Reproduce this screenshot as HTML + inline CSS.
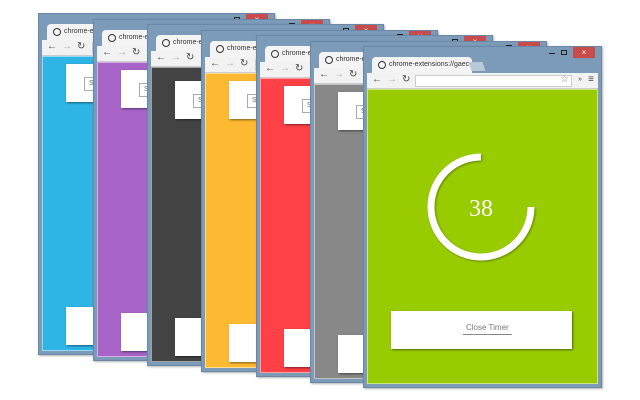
<!DOCTYPE html>
<html><head><meta charset="utf-8"><style>
*{margin:0;padding:0;box-sizing:border-box}
body{width:640px;height:400px;background:#fff;position:relative;overflow:hidden;font-family:"Liberation Sans",sans-serif}
.w{position:absolute;width:237px;height:342px;background:#7b9bb9;border:1px solid #6a88a6;box-shadow:1px 1px 2px rgba(0,0,0,.3);overflow:hidden}
.cl{position:absolute;right:6px;top:0;width:22px;height:11px;background:#c94b4b;color:#fff;font-size:8px;text-align:center;line-height:11px}
.mx{position:absolute;right:34px;top:3px;width:6px;height:5px;border:1px solid #222}
.mn{position:absolute;right:46px;top:6px;width:6px;height:1px;background:#222}
.tab{position:absolute;left:8px;top:10px;width:100px;height:17px;background:#f4f4f4;border-radius:4px 4px 0 0;font-size:7px;color:#333;padding:4px 0 0 17px;white-space:nowrap;overflow:hidden}
.tab:before{content:"";position:absolute;left:6px;top:4px;width:6px;height:6px;border:1.3px solid #333;border-radius:50%}
.tb{position:absolute;left:3px;right:3px;top:26px;height:16px;background:#f2f2f2;border-bottom:1px solid #ccc;font-size:10px;color:#444}
.tb span{position:absolute;top:1px}
.url{position:absolute;left:50px;right:30px;top:2px;height:12px;background:#fff;border:1px solid #ccc}
.c{position:absolute;left:3px;right:3px;top:42px;bottom:3px;border:1px solid rgba(255,255,255,.5)}
.box{position:absolute;background:#fff;box-shadow:1px 1px 2px rgba(0,0,0,.5)}
.sb{position:absolute;left:18px;top:13px;width:40px;height:14px;border:1px solid #aaa;font-size:7px;color:#666;padding:2px 0 0 4px}
</style></head><body>

<div class="w" style="left:38px;top:13px"><div class="mn"></div><div class="mx"></div><div class="cl">×</div><div class="tab">chrome-extensions://</div><div class="tb"><span style="left:5px">←</span><span style="left:20px;color:#aaa">→</span><span style="left:35px">↻</span><div class="url"></div></div><div class="c" style="background:#2eb5e5"><div class="box" style="left:23px;top:7px;width:100px;height:38px"><div class="sb">S</div></div><div class="box" style="left:23px;top:250px;width:100px;height:38px"></div></div></div>

<div class="w" style="left:93px;top:19px"><div class="mn"></div><div class="mx"></div><div class="cl">×</div><div class="tab">chrome-extensions://</div><div class="tb"><span style="left:5px">←</span><span style="left:20px;color:#aaa">→</span><span style="left:35px">↻</span><div class="url"></div></div><div class="c" style="background:#a864c9"><div class="box" style="left:23px;top:7px;width:100px;height:38px"><div class="sb">S</div></div><div class="box" style="left:23px;top:250px;width:100px;height:38px"></div></div></div>

<div class="w" style="left:147px;top:24px"><div class="mn"></div><div class="mx"></div><div class="cl">×</div><div class="tab">chrome-extensions://</div><div class="tb"><span style="left:5px">←</span><span style="left:20px;color:#aaa">→</span><span style="left:35px">↻</span><div class="url"></div></div><div class="c" style="background:#434343"><div class="box" style="left:23px;top:13px;width:100px;height:38px"><div class="sb">S</div></div><div class="box" style="left:23px;top:250px;width:100px;height:38px"></div></div></div>

<div class="w" style="left:201px;top:30px"><div class="mn"></div><div class="mx"></div><div class="cl">×</div><div class="tab">chrome-extensions://</div><div class="tb"><span style="left:5px">←</span><span style="left:20px;color:#aaa">→</span><span style="left:35px">↻</span><div class="url"></div></div><div class="c" style="background:#fdb931"><div class="box" style="left:23px;top:7px;width:100px;height:38px"><div class="sb">S</div></div><div class="box" style="left:23px;top:250px;width:100px;height:38px"></div></div></div>

<div class="w" style="left:256px;top:35px"><div class="mn"></div><div class="mx"></div><div class="cl">×</div><div class="tab">chrome-extensions://</div><div class="tb"><span style="left:5px">←</span><span style="left:20px;color:#aaa">→</span><span style="left:35px">↻</span><div class="url"></div></div><div class="c" style="background:#fd4146"><div class="box" style="left:23px;top:7px;width:100px;height:38px"><div class="sb">S</div></div><div class="box" style="left:23px;top:250px;width:100px;height:38px"></div></div></div>

<div class="w" style="left:310px;top:41px"><div class="mn"></div><div class="mx"></div><div class="cl">×</div><div class="tab">chrome-extensions://</div><div class="tb"><span style="left:5px">←</span><span style="left:20px;color:#aaa">→</span><span style="left:35px">↻</span><div class="url"></div></div><div class="c" style="background:#888"><div class="box" style="left:23px;top:7px;width:100px;height:38px"><div class="sb">S</div></div><div class="box" style="left:23px;top:250px;width:100px;height:38px"></div></div></div>

<div class="w" style="left:363px;top:46px;width:239px"><div class="mn"></div><div class="mx"></div><div class="cl">×</div><div class="tab" style="width:100px">chrome-extensions://gaec ×</div><div style="position:absolute;left:106px;top:15px;width:14px;height:9px;background:#b9c9d9;transform:skewX(20deg)"></div><div class="tb"><span style="left:5px">←</span><span style="left:20px;color:#aaa">→</span><span style="left:35px">↻</span><div class="url" style="left:48px;right:26px"><span style="position:absolute;right:2px;top:-2px;font-size:10px;color:#888">☆</span></div><span style="right:16px;font-size:7px;top:3px">»</span><span style="right:4px">≡</span></div>
<div class="c" style="background:#99cc00">
<svg style="position:absolute;left:0;top:0" width="231" height="298"><g transform="translate(113,117)"><path d="M0,-50 A50,50 0 1 0 50,0" fill="none" stroke="#fff" stroke-width="7" style="filter:drop-shadow(1px 1px 1px rgba(0,0,0,.35))"/><text x="0" y="9" text-anchor="middle" font-family="Liberation Serif,serif" font-size="24" fill="#fff">38</text></g></svg>
<div class="box" style="left:23px;top:221px;width:181px;height:38px"><div style="position:absolute;left:72px;top:12px;font-size:8px;color:#777;border-bottom:1px solid #888;padding:0 3px 2px">Close Timer</div></div>
</div></div>

</body></html>
